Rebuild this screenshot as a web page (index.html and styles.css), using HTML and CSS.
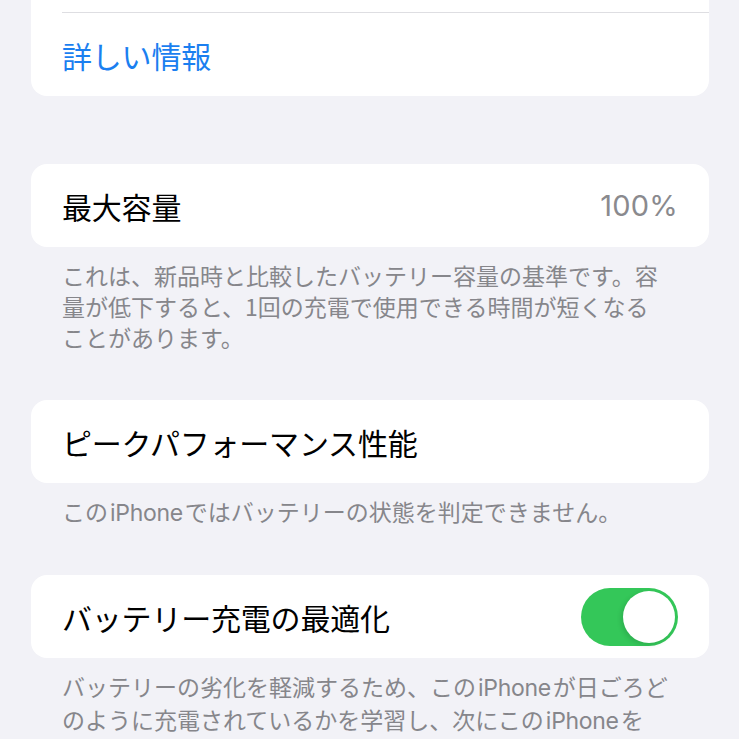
FILE: index.html
```html
<!DOCTYPE html>
<html lang="ja">
<head>
<meta charset="utf-8">
<title>バッテリーの状態</title>
<link rel="stylesheet" href="styles.css">
</head>
<body>
<div class="page">
  <section class="group first">
    <div class="card">
      <div class="row hidden-row"></div>
      <div class="sep"></div>
      <div class="row"><span class="link">詳しい情報</span></div>
    </div>
  </section>

  <section class="group">
    <div class="card">
      <div class="row">
        <span class="label">最大容量</span>
        <span class="value">100%</span>
      </div>
    </div>
    <p class="footer">これは、新品時と比較したバッテリー容量の基準です。容<br>量が低下すると、1回の充電で使用できる時間が短くなる<br>ことがあります。</p>
  </section>

  <section class="group short">
    <div class="card">
      <div class="row"><span class="label">ピークパフォーマンス性能</span></div>
    </div>
    <p class="footer">この<span class="lat">iPhone</span>ではバッテリーの状態を判定できません。</p>
  </section>

  <section class="group">
    <div class="card">
      <div class="row">
        <span class="label">バッテリー充電の最適化</span>
        <span class="toggle on"><span class="knob"></span></span>
      </div>
    </div>
    <p class="footer">バッテリーの劣化を軽減するため、この<span class="lat">iPhone</span>が日ごろど<br>のように充電されているかを学習し、次にこの<span class="lat">iPhone</span>を<br>ずっと充電器に接続する時まで80%以上の充電を保留します。</p>
  </section>
</div>
</body>
</html>
```
FILE: styles.css
```css
html, body {
  margin: 0;
  padding: 0;
  background: #f2f2f7;
}
body {
  width: 739px;
  height: 739px;
  overflow: hidden;
  font-family: "Noto Sans CJK JP", "Noto Sans", sans-serif;
  color: #000;
}
.page {
  display: flex;
  flex-direction: column;
  padding: 0 30px 0 31px;
  margin-top: -71px;
}
.group {
  display: flex;
  flex-direction: column;
  margin-bottom: 47px;
}
.group.first {
  margin-bottom: 68px;
}
.group.short {
  margin-bottom: 46px;
}
.card {
  background: #fff;
  border-radius: 16px;
  overflow: hidden;
  display: flex;
  flex-direction: column;
}
.row {
  height: 83px;
  display: flex;
  align-items: center;
  justify-content: space-between;
  padding: 0 31px;
}
.sep {
  height: 1px;
  margin-left: 31px;
  background: #dedee2;
}
.link {
  font-size: 30px;
  color: #1b7ff0;
  letter-spacing: -0.2px;
}
.label {
  font-size: 30px;
  letter-spacing: -0.2px;
}
.value {
  font-family: "Inter", "Noto Sans", sans-serif;
  font-size: 29px;
  color: #8a8a8e;
  letter-spacing: 0.2px;
}
.footer {
  margin: 0;
  padding: 13px 31px 0;
  font-size: 23px;
  line-height: 31px;
  color: #86868b;
  white-space: nowrap;
}
.lat {
  font-family: "Inter", "Noto Sans", sans-serif;
  margin: 0 2px;
  letter-spacing: -0.3px;
}
.toggle {
  width: 97px;
  height: 58px;
  border-radius: 29px;
  background: #34c759;
  display: flex;
  align-items: center;
  justify-content: flex-end;
  padding: 0 3px;
  box-sizing: border-box;
}
.knob {
  width: 52px;
  height: 52px;
  border-radius: 50%;
  background: #fff;
  box-shadow: -2px 2px 5px rgba(0,0,0,0.12);
}
```
